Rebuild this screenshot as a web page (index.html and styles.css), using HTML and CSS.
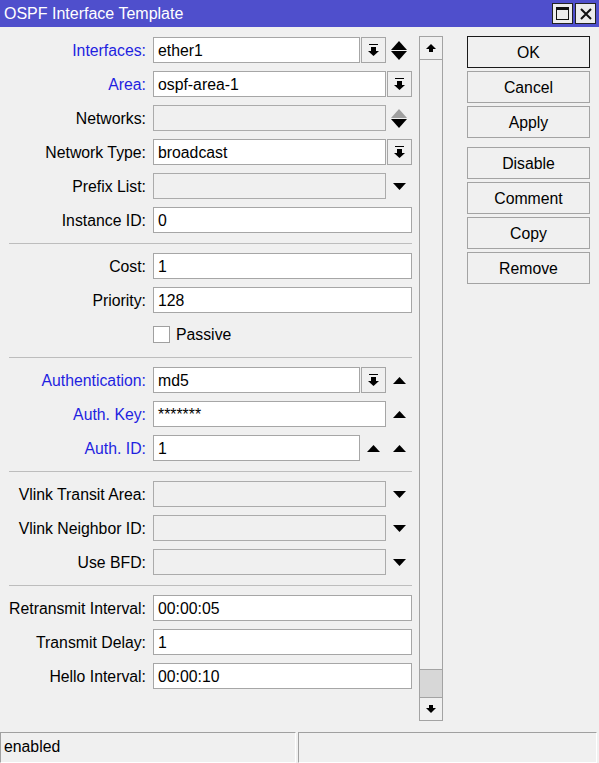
FILE: index.html
```html
<!DOCTYPE html>
<html>
<head>
<meta charset="utf-8">
<title>OSPF Interface Template</title>
<link rel="stylesheet" href="styles.css">
</head>
<body>
<div class="window">
  <div class="titlebar">
    <span class="title">OSPF Interface Template</span>
    <div class="tb-buttons">
      <div class="tb-btn"><svg width="13" height="13" viewBox="0 0 13 13"><rect x="0.5" y="0.5" width="12" height="12" fill="none" stroke="#111"/><rect x="0" y="0" width="13" height="3" fill="#111"/></svg></div>
      <div class="tb-btn"><svg width="12" height="12" viewBox="0 0 12 12"><path d="M1 1 L11 11 M11 1 L1 11" stroke="#111" stroke-width="2" fill="none"/></svg></div>
    </div>
  </div>

  <div class="body">
    <div class="form">
      <div class="row">
        <label class="lbl blue">Interfaces:</label>
        <div class="field">
          <div class="input">ether1</div>
          <div class="slot btn-slot"><div class="dd"><svg width="11" height="12" viewBox="0 0 11 12"><rect x="1" y="0" width="9" height="1"/><rect x="3" y="3" width="5" height="4"/><polygon points="0,7 11,7 5.5,12"/></svg></div></div>
          <div class="slot"><svg width="16" height="19" viewBox="0 0 16 19"><polygon points="8,0 16,9 0,9"/><polygon points="0,10 16,10 8,19"/></svg></div>
        </div>
      </div>
      <div class="row">
        <label class="lbl blue">Area:</label>
        <div class="field">
          <div class="input">ospf-area-1</div>
          <div class="slot btn-slot"><div class="dd"><svg width="11" height="12" viewBox="0 0 11 12"><rect x="1" y="0" width="9" height="1"/><rect x="3" y="3" width="5" height="4"/><polygon points="0,7 11,7 5.5,12"/></svg></div></div>
        </div>
      </div>
      <div class="row">
        <label class="lbl">Networks:</label>
        <div class="field">
          <div class="input disabled"></div>
          <div class="slot"><svg width="16" height="19" viewBox="0 0 16 19"><polygon points="8,0 16,9 0,9" fill="#a0a0a0"/><polygon points="0,10 16,10 8,19"/></svg></div>
        </div>
      </div>
      <div class="row">
        <label class="lbl">Network Type:</label>
        <div class="field">
          <div class="input">broadcast</div>
          <div class="slot btn-slot"><div class="dd"><svg width="11" height="12" viewBox="0 0 11 12"><rect x="1" y="0" width="9" height="1"/><rect x="3" y="3" width="5" height="4"/><polygon points="0,7 11,7 5.5,12"/></svg></div></div>
        </div>
      </div>
      <div class="row">
        <label class="lbl">Prefix List:</label>
        <div class="field">
          <div class="input disabled"></div>
          <div class="slot"><svg width="13" height="7" viewBox="0 0 13 7"><polygon points="0,0 13,0 6.5,7"/></svg></div>
        </div>
      </div>
      <div class="row">
        <label class="lbl">Instance ID:</label>
        <div class="field"><div class="input">0</div></div>
      </div>

      <div class="sep"></div>

      <div class="row">
        <label class="lbl">Cost:</label>
        <div class="field"><div class="input">1</div></div>
      </div>
      <div class="row">
        <label class="lbl">Priority:</label>
        <div class="field"><div class="input">128</div></div>
      </div>
      <div class="row">
        <span class="lbl"></span>
        <div class="field check-field"><span class="checkbox"></span><span class="check-text">Passive</span></div>
      </div>

      <div class="sep"></div>

      <div class="row">
        <label class="lbl blue">Authentication:</label>
        <div class="field">
          <div class="input">md5</div>
          <div class="slot btn-slot"><div class="dd"><svg width="11" height="12" viewBox="0 0 11 12"><rect x="1" y="0" width="9" height="1"/><rect x="3" y="3" width="5" height="4"/><polygon points="0,7 11,7 5.5,12"/></svg></div></div>
          <div class="slot"><svg width="13" height="7" viewBox="0 0 13 7"><polygon points="6.5,0 13,7 0,7"/></svg></div>
        </div>
      </div>
      <div class="row">
        <label class="lbl blue">Auth. Key:</label>
        <div class="field">
          <div class="input">*******</div>
          <div class="slot"><svg width="13" height="7" viewBox="0 0 13 7"><polygon points="6.5,0 13,7 0,7"/></svg></div>
        </div>
      </div>
      <div class="row">
        <label class="lbl blue">Auth. ID:</label>
        <div class="field">
          <div class="input">1</div>
          <div class="slot"><svg width="13" height="7" viewBox="0 0 13 7"><polygon points="6.5,0 13,7 0,7"/></svg></div>
          <div class="slot"><svg width="13" height="7" viewBox="0 0 13 7"><polygon points="6.5,0 13,7 0,7"/></svg></div>
        </div>
      </div>

      <div class="sep"></div>

      <div class="row">
        <label class="lbl">Vlink Transit Area:</label>
        <div class="field">
          <div class="input disabled"></div>
          <div class="slot"><svg width="13" height="7" viewBox="0 0 13 7"><polygon points="0,0 13,0 6.5,7"/></svg></div>
        </div>
      </div>
      <div class="row">
        <label class="lbl">Vlink Neighbor ID:</label>
        <div class="field">
          <div class="input disabled"></div>
          <div class="slot"><svg width="13" height="7" viewBox="0 0 13 7"><polygon points="0,0 13,0 6.5,7"/></svg></div>
        </div>
      </div>
      <div class="row">
        <label class="lbl">Use BFD:</label>
        <div class="field">
          <div class="input disabled"></div>
          <div class="slot"><svg width="13" height="7" viewBox="0 0 13 7"><polygon points="0,0 13,0 6.5,7"/></svg></div>
        </div>
      </div>

      <div class="sep"></div>

      <div class="row">
        <label class="lbl">Retransmit Interval:</label>
        <div class="field"><div class="input">00:00:05</div></div>
      </div>
      <div class="row">
        <label class="lbl">Transmit Delay:</label>
        <div class="field"><div class="input">1</div></div>
      </div>
      <div class="row">
        <label class="lbl">Hello Interval:</label>
        <div class="field"><div class="input">00:00:10</div></div>
      </div>
    </div>

    <div class="scrollbar">
      <div class="sb-btn sb-up"><svg width="10" height="9" viewBox="0 0 10 9"><polygon points="5,0 10,5 0,5"/><rect x="3" y="5" width="4" height="3"/></svg></div>
      <div class="sb-track"></div>
      <div class="sb-thumb"></div>
      <div class="sb-btn sb-down"><svg width="10" height="9" viewBox="0 0 10 9"><rect x="3" y="0" width="4" height="3"/><polygon points="0,3 10,3 5,8"/></svg></div>
    </div>

    <div class="buttons">
      <div class="btn default">OK</div>
      <div class="btn">Cancel</div>
      <div class="btn">Apply</div>
      <div class="btn group">Disable</div>
      <div class="btn">Comment</div>
      <div class="btn">Copy</div>
      <div class="btn">Remove</div>
    </div>
  </div>

  <div class="statusbar">
    <div class="panel left">enabled</div>
    <div class="panel right"></div>
  </div>
</div>
</body>
</html>
```

FILE: styles.css
```css
* { box-sizing: border-box; }

html, body {
  margin: 0;
  padding: 0;
  background: #f0f0f0;
}

body {
  font-family: "Liberation Sans", Arial, sans-serif;
  font-size: 15.8px;
  color: #000;
}

.window {
  width: 599px;
  height: 763px;
  display: flex;
  flex-direction: column;
  background: #f0f0f0;
}

.titlebar {
  height: 27px;
  background: #4f4fcc;
  display: flex;
  align-items: center;
  justify-content: space-between;
  padding: 0 3px 0 4px;
  flex: none;
}

.title {
  color: #fff;
  font-size: 16px;
}

.tb-buttons {
  display: flex;
  gap: 2px;
}

.tb-btn {
  width: 21px;
  height: 21px;
  background: #ececec;
  border: 1px solid #222;
  display: flex;
  align-items: center;
  justify-content: center;
}

.body {
  flex: 1;
  display: flex;
  align-items: flex-start;
  padding-top: 9px;
}

.form {
  width: 412px;
  margin-top: 1px;
  display: flex;
  flex-direction: column;
  gap: 8px;
}

.row {
  display: flex;
  height: 26px;
  align-items: center;
}

.lbl {
  width: 147px;
  height: 26px;
  text-align: right;
  padding-right: 1px;
  padding-top: 1px;
  flex: none;
  line-height: 26px;
}

.lbl.blue {
  color: #1f1fe0;
}

.field {
  width: 259px;
  margin-left: 6px;
  height: 26px;
  display: flex;
  align-items: center;
}

.input {
  flex: 1;
  height: 26px;
  background: #fff;
  border: 1px solid #a6a6a6;
  padding-left: 4px;
  padding-top: 1px;
  line-height: 24px;
  white-space: nowrap;
  overflow: hidden;
}

.input.disabled {
  background: #f0f0f0;
  border-color: #ababab;
}

.slot {
  width: 26px;
  height: 26px;
  flex: none;
  display: flex;
  align-items: center;
  justify-content: center;
}

.btn-slot {
  justify-content: flex-end;
}

.dd {
  width: 25px;
  height: 26px;
  border: 1px solid #a6a6a6;
  background: #f0f0f0;
  display: flex;
  align-items: center;
  justify-content: center;
}

.sep {
  height: 1px;
  background: #bdbdbd;
  margin: 2px 0 1px 9px;
}

.check-field {
  gap: 6px;
}

.check-text {
  padding-top: 1px;
}

.checkbox {
  width: 17px;
  height: 17px;
  background: #fff;
  border: 1px solid #a0a0a0;
  flex: none;
}

.scrollbar {
  width: 24px;
  height: 685px;
  margin-left: 7px;
  border: 1px solid #a3a3a3;
  display: flex;
  flex-direction: column;
  flex: none;
}

.sb-btn {
  height: 23px;
  display: flex;
  align-items: center;
  justify-content: center;
  flex: none;
}

.sb-up {
  border-bottom: 1px solid #a3a3a3;
}

.sb-track {
  flex: 1;
}

.sb-thumb {
  height: 29px;
  background: #d7d7d7;
  border-top: 1px solid #a3a3a3;
  border-bottom: 1px solid #a3a3a3;
  flex: none;
}

.sb-down {
  height: 22px;
}

.buttons {
  margin-left: 24px;
  width: 123px;
  display: flex;
  flex-direction: column;
  gap: 3px;
}

.btn {
  height: 32px;
  border: 1px solid #a3a3a3;
  background: #f0f0f0;
  padding-top: 2px;
  display: flex;
  align-items: center;
  justify-content: center;
}

.btn.default {
  border-color: #1a1a1a;
}

.btn.group {
  margin-top: 6px;
}

.statusbar {
  height: 31px;
  display: flex;
  gap: 2px;
  padding-right: 2px;
  flex: none;
}

.panel {
  height: 31px;
  border-top: 1px solid #a0a0a0;
  border-left: 1px solid #a0a0a0;
  border-right: 1px solid #fff;
  border-bottom: 1px solid #fff;
  line-height: 28px;
  padding-left: 3px;
}

.panel.left {
  width: 296px;
}

.panel.right {
  flex: 1;
}
```
